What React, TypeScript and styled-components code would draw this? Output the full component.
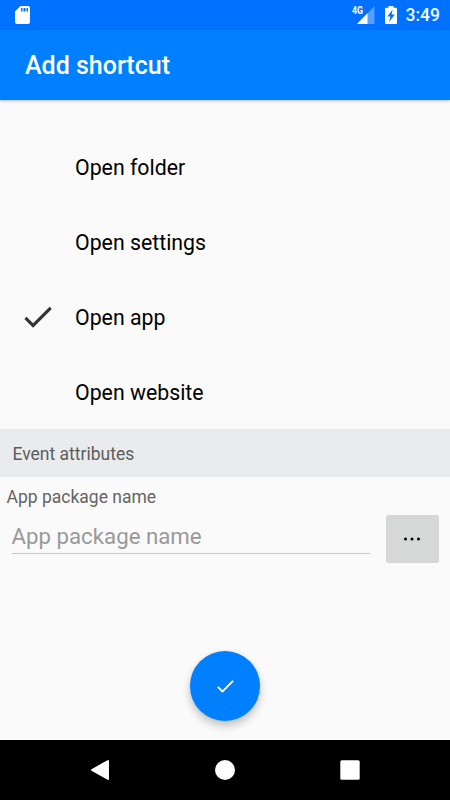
import React, { useState } from 'react';
import styled, { createGlobalStyle } from 'styled-components';

const GlobalStyle = createGlobalStyle`
  * {
    box-sizing: border-box;
  }
  body {
    margin: 0;
    background: #fafafa;
    font-family: Roboto, sans-serif;
  }
`;

const Screen = styled.div`
  display: flex;
  flex-direction: column;
  width: 450px;
  height: 800px;
  overflow: hidden;
  background: #fafafa;
`;

const StatusBar = styled.div`
  display: flex;
  flex: none;
  align-items: center;
  justify-content: space-between;
  height: 30px;
  padding: 0 10px 0 15px;
  background: #0070ff;
`;

const StatusIcons = styled.div`
  display: flex;
  align-items: center;
`;

const Network = styled.svg`
  margin-right: 10px;
`;

const Clock = styled.span`
  margin-left: 9px;
  color: #f2f8ff;
  font-size: 17.5px;
  font-weight: 500;
  line-height: 31px;
`;

const AppBar = styled.header`
  flex: none;
  height: 70px;
  padding-left: 25px;
  background: #007fff;
  box-shadow: 0 1px 3px rgba(0, 0, 0, 0.25);
`;

const Title = styled.h1`
  margin: 0;
  color: #fff;
  font-size: 25px;
  font-weight: 500;
  line-height: 72px;
`;

const Actions = styled.div`
  flex: none;
  padding-top: 29px;
`;

const ActionRow = styled.div`
  display: flex;
  align-items: center;
  height: 75px;
  color: #000;
  font-size: 21.3px;
  line-height: 75px;
`;

const ActionIcon = styled.div`
  display: flex;
  justify-content: center;
  width: 75px;
`;

const ActionName = styled.span`
  padding-top: 1px;
`;

const SectionHeader = styled.div`
  flex: none;
  height: 48px;
  padding-left: 12.5px;
  background: #e9ebed;
  color: #5c5d5e;
  font-size: 17.5px;
  line-height: 51px;
`;

const Label = styled.label`
  flex: none;
  height: 38px;
  padding-left: 6.5px;
  color: #646464;
  font-size: 17.5px;
  line-height: 40px;
`;

const Field = styled.div`
  display: flex;
  flex: none;
  align-items: flex-start;
  justify-content: space-between;
  padding: 0 11.5px;
`;

const Input = styled.input`
  width: 358.5px;
  height: 39px;
  padding: 4px 0 0;
  border: 0;
  border-bottom: 1px solid #c7c7c7;
  outline: 0;
  background: transparent;
  font-family: inherit;
  font-size: 22.25px;

  &::placeholder {
    color: #999;
    opacity: 1;
  }
`;

const MoreButton = styled.button`
  display: flex;
  align-items: center;
  justify-content: center;
  width: 52.5px;
  height: 47.5px;
  padding: 0;
  border: 0;
  border-radius: 2.5px;
  background: #d6d7d7;
`;

const Footer = styled.div`
  display: flex;
  flex: 1;
  align-items: flex-end;
  justify-content: center;
  padding-bottom: 19px;
`;

const Fab = styled.button`
  display: flex;
  align-items: center;
  justify-content: center;
  width: 70px;
  height: 70px;
  padding: 0;
  border: 0;
  border-radius: 50%;
  background: #007fff;
  box-shadow: 0 5px 9px rgba(0, 0, 0, 0.22), 0 0 3px rgba(0, 0, 0, 0.1);
`;

const NavBar = styled.nav`
  display: flex;
  flex: none;
  align-items: center;
  justify-content: space-between;
  height: 60px;
  padding: 0 85px;
  background: #000;
`;

const Check = ({ size, color }: { size: number; color: string }) => (
  <svg width={size} height={size} viewBox="0 0 24 24" fill={color}>
    <path d="M9 16.17L4.83 12l-1.42 1.41L9 19 21 7l-1.41-1.41z" />
  </svg>
);

const actions = ['Open folder', 'Open settings', 'Open app', 'Open website'];

const App = () => {
  const [selected, setSelected] = useState('Open app');
  const [packageName, setPackageName] = useState('');

  return (
    <>
      <GlobalStyle />
      <Screen>
        <StatusBar>
          <svg width="15" height="18" viewBox="0 0 15 18">
            <path
              fill="#fff"
              fillRule="evenodd"
              d="M5.5 0H13a2 2 0 0 1 2 2v14a2 2 0 0 1-2 2H2a2 2 0 0 1-2-2V5.5zM6 2v3.6h1.5V2zM8.5 2v3.6h2V2zM11.5 2v3.6H13V2z"
            />
          </svg>
          <StatusIcons>
            <Network width="23" height="20" viewBox="0 0 23 20">
              <path fill="#559fff" d="M22.5 1v18H5z" />
              <path fill="#fff" d="M15.5 8.2V19H5z" />
              <text
                x="0"
                y="9"
                fill="#fff"
                fontFamily="Roboto"
                fontSize="11"
                fontWeight="700"
                textLength="11"
                lengthAdjust="spacingAndGlyphs"
              >
                4G
              </text>
            </Network>
            <svg width="12" height="18" viewBox="0 0 12 18">
              <path
                fill="#fff"
                fillRule="evenodd"
                d="M3.5 0h5v1.8H11a1 1 0 0 1 1 1V17a1 1 0 0 1-1 1H1a1 1 0 0 1-1-1V2.8a1 1 0 0 1 1-1h2.5zM7.6 3.6L2.4 10.6H5.4L4 16L9.8 8.5H6.6z"
              />
            </svg>
            <Clock>3:49</Clock>
          </StatusIcons>
        </StatusBar>
        <AppBar>
          <Title>Add shortcut</Title>
        </AppBar>
        <Actions>
          {actions.map((action) => (
            <ActionRow key={action} onClick={() => setSelected(action)}>
              <ActionIcon>
                {selected === action && <Check size={37.5} color="#333" />}
              </ActionIcon>
              <ActionName>{action}</ActionName>
            </ActionRow>
          ))}
        </Actions>
        <SectionHeader>Event attributes</SectionHeader>
        <Label htmlFor="package">App package name</Label>
        <Field>
          <Input
            id="package"
            placeholder="App package name"
            value={packageName}
            onChange={(e) => setPackageName(e.target.value)}
          />
          <MoreButton>
            <svg width="18" height="4" viewBox="0 0 18 4">
              <circle cx="2.5" cy="2" r="1.5" />
              <circle cx="9" cy="2" r="1.5" />
              <circle cx="15.5" cy="2" r="1.5" />
            </svg>
          </MoreButton>
        </Field>
        <Footer>
          <Fab>
            <Check size={22.5} color="#fff" />
          </Fab>
        </Footer>
        <NavBar>
          <svg width="30" height="30" viewBox="0 0 30 30">
            <path
              d="M7 15L23 6v18z"
              fill="#fff"
              stroke="#fff"
              strokeWidth="2"
              strokeLinejoin="round"
            />
          </svg>
          <svg width="30" height="30" viewBox="0 0 30 30">
            <circle cx="15" cy="15" r="10" fill="#fff" />
          </svg>
          <svg width="30" height="30" viewBox="0 0 30 30">
            <rect x="5.3" y="5.3" width="19.4" height="19.4" rx="1.5" fill="#fff" />
          </svg>
        </NavBar>
      </Screen>
    </>
  );
};

export default App;
